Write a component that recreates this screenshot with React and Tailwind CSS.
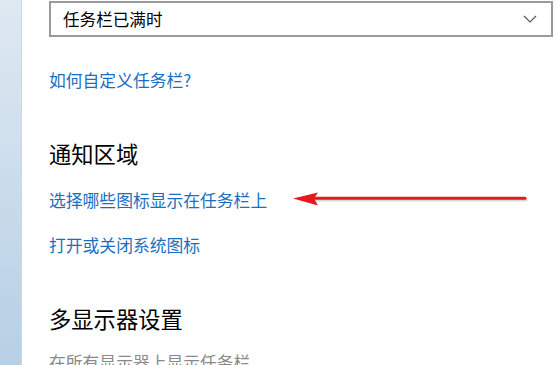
export default function App() {
  const font = { fontFamily: '"Noto Sans CJK SC", "Noto Sans", sans-serif' };
  return (
    <div className="relative w-[558px] h-[365px] overflow-hidden bg-white flex" style={font}>
      <div className="w-[22px] h-full bg-gradient-to-b from-[#dfe9f2] to-[#b6d0e5] border-r border-[#c9d8e4]" />
      <div className="flex-1 flex flex-col pl-[27px] pr-[5px]">
        <div className="mt-[1px] h-[36px] shrink-0 border-2 border-[#9a9a9a] flex items-center justify-between pl-[12px] pr-[14px] bg-white">
          <span className="text-[16.6px] text-black leading-none">任务栏已满时</span>
          <svg width="14" height="8" viewBox="0 0 14 8" fill="none">
            <path d="M1 1 L7 7 L13 1" stroke="#555" strokeWidth="1.1" />
          </svg>
        </div>
        <div className="mt-[31px] h-[24px] shrink-0 leading-[24px] text-[16.8px] text-[#1a6fc2]">如何自定义任务栏?</div>
        <div className="mt-[46px] h-[30px] shrink-0 leading-[30px] text-[22.3px] text-black">通知区域</div>
        <div className="mt-[20px] h-[24px] shrink-0 leading-[24px] text-[16.8px] text-[#1a6fc2]">选择哪些图标显示在任务栏上</div>
        <div className="mt-[21px] h-[24px] shrink-0 leading-[24px] text-[16.8px] text-[#1a6fc2]">打开或关闭系统图标</div>
        <div className="mt-[46px] h-[30px] shrink-0 leading-[30px] text-[22.3px] text-black">多显示器设置</div>
        <div className="mt-[17px] h-[24px] shrink-0 leading-[24px] text-[16.8px] text-[#8a8a8a] whitespace-nowrap">在所有显示器上显示任务栏</div>
      </div>
      <svg className="absolute left-0 top-0 pointer-events-none" width="558" height="365" viewBox="0 0 558 365">
        <line x1="312" y1="200" x2="526" y2="200" stroke="#d8d8d8" strokeWidth="3" strokeLinecap="round" />
        <line x1="312" y1="198.3" x2="525" y2="198.3" stroke="#e3191c" strokeWidth="3" strokeLinecap="round" />
        <path d="M293 198.5 L318 192.5 L314 198.5 L318 205.5 Z" fill="#e3191c" />
      </svg>
    </div>
  );
}
